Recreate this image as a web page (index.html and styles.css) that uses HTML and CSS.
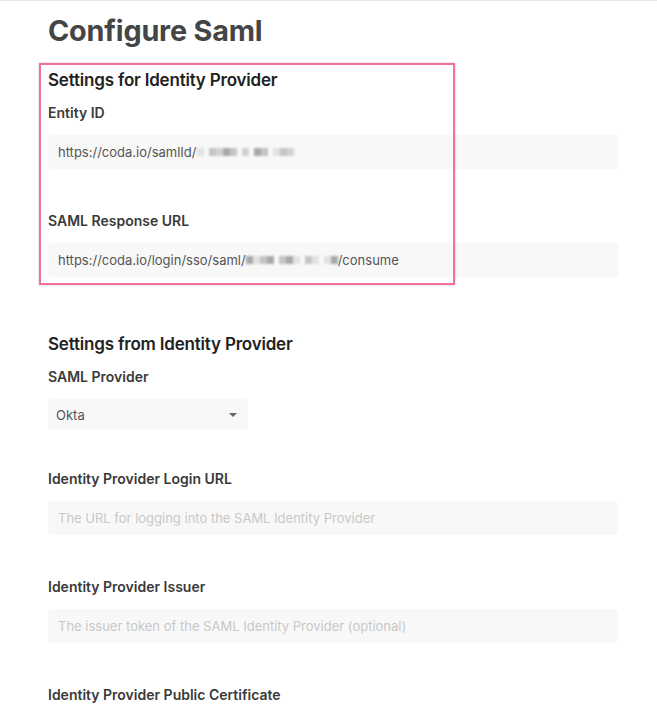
FILE: index.html
```html
<!DOCTYPE html>
<html lang="en">
<head>
<meta charset="utf-8">
<title>Configure Saml</title>
<link rel="stylesheet" href="styles.css">
</head>
<body>
<div class="page">
  <h1 class="title">Configure Saml</h1>

  <section class="section section-first">
    <div class="highlight"></div>
    <h2 class="section-title">Settings for Identity Provider</h2>
    <div class="field">
      <label class="label">Entity ID</label>
      <div class="input value">https://coda.io/samlId/<span class="blur"><i class="b1"></i><i class="gap"></i><i class="b2"></i><i class="b4"></i><i class="b3"></i><i class="b2"></i><i class="gap"></i><i class="b4"></i><i class="gap"></i><i class="b3"></i><i class="b2"></i><i class="gap"></i><i class="b1"></i><i class="b2"></i><i class="b4"></i></span></div>
    </div>
    <div class="field">
      <label class="label">SAML Response URL</label>
      <div class="input value">https://coda.io/login/sso/saml/<span class="blur"><i class="b3"></i><i class="b1"></i><i class="b2"></i><i class="b3"></i><i class="gap"></i><i class="b2"></i><i class="b3"></i><i class="b1"></i><i class="gap"></i><i class="b2"></i><i class="b1"></i><i class="gap"></i><i class="b1"></i><i class="b3"></i></span>/consume</div>
    </div>
  </section>

  <section class="section section-second">
    <h2 class="section-title">Settings from Identity Provider</h2>
    <div class="field field-select">
      <label class="label">SAML Provider</label>
      <div class="select">
        <span class="value">Okta</span>
        <span class="caret"></span>
      </div>
    </div>
    <div class="field">
      <label class="label">Identity Provider Login URL</label>
      <div class="input placeholder">The URL for logging into the SAML Identity Provider</div>
    </div>
    <div class="field">
      <label class="label">Identity Provider Issuer</label>
      <div class="input placeholder">The issuer token of the SAML Identity Provider (optional)</div>
    </div>
    <div class="field">
      <label class="label">Identity Provider Public Certificate</label>
    </div>
  </section>
</div>
</body>
</html>
```

FILE: styles.css
```css
* { box-sizing: border-box; }
html, body {
  margin: 0;
  padding: 0;
  background: #ffffff;
  font-family: Inter, "Noto Sans", "Liberation Sans", sans-serif;
}
body {
  border-top: 1px solid #e6e6e6;
  height: 710px;
  overflow: hidden;
}
.page {
  padding: 12px 39px 0 48px;
  display: flex;
  flex-direction: column;
}
.title {
  margin: 0;
  font-size: 28.8px;
  line-height: 36px;
  font-weight: 700;
  color: #454545;
  letter-spacing: -0.2px;
}
.section {
  position: relative;
  display: flex;
  flex-direction: column;
}
.section-first { margin-top: 19px; }
.section-first .field:last-child { margin-bottom: 0; }
.section-second { margin-top: 55px; }
.highlight {
  position: absolute;
  left: -9px;
  top: -5px;
  width: 416px;
  height: 222px;
  border: 2px solid #f27199;
  box-shadow: 0 0 2px rgba(0,0,0,0.25);
  pointer-events: none;
}
.section-title {
  margin: 0 0 11px 0;
  font-size: 17px;
  line-height: 24px;
  font-weight: 600;
  color: #222;
  letter-spacing: -0.2px;
}
.field {
  display: flex;
  flex-direction: column;
  margin-bottom: 42px;
}
.label {
  font-size: 14px;
  line-height: 20px;
  font-weight: 600;
  color: #3a3a3a;
  margin-bottom: 12px;
}
.input {
  width: 570px;
  height: 34px;
  background: #f8f8f8;
  border-radius: 4px;
  padding: 0 10px;
  display: flex;
  align-items: center;
  font-size: 13px;
  white-space: nowrap;
}
.value { color: #555; }
.placeholder { color: #c8c8c8; }
.select {
  width: 200px;
  height: 31px;
  background: #f8f8f8;
  border-radius: 4px;
  padding: 0 9px 0 8px;
  display: flex;
  align-items: center;
  justify-content: space-between;
  font-size: 13px;
}
.field-select { margin-bottom: 39px; }
.caret {
  width: 0;
  height: 0;
  border-left: 4px solid transparent;
  border-right: 4px solid transparent;
  border-top: 4px solid #666;
  margin-right: 2px;
}
.blur {
  display: inline-flex;
  align-items: center;
  height: 10px;
  filter: blur(0.8px);
}
.blur i {
  display: inline-block;
  height: 8px;
  width: 7px;
}
.blur .b1 { background: #e2e2e2; }
.blur .b2 { background: #c4c4c4; }
.blur .b3 { background: #a9a9a9; }
.blur .b4 { background: #d2d2d2; }
.blur .gap { background: transparent; width: 5px; }
```
